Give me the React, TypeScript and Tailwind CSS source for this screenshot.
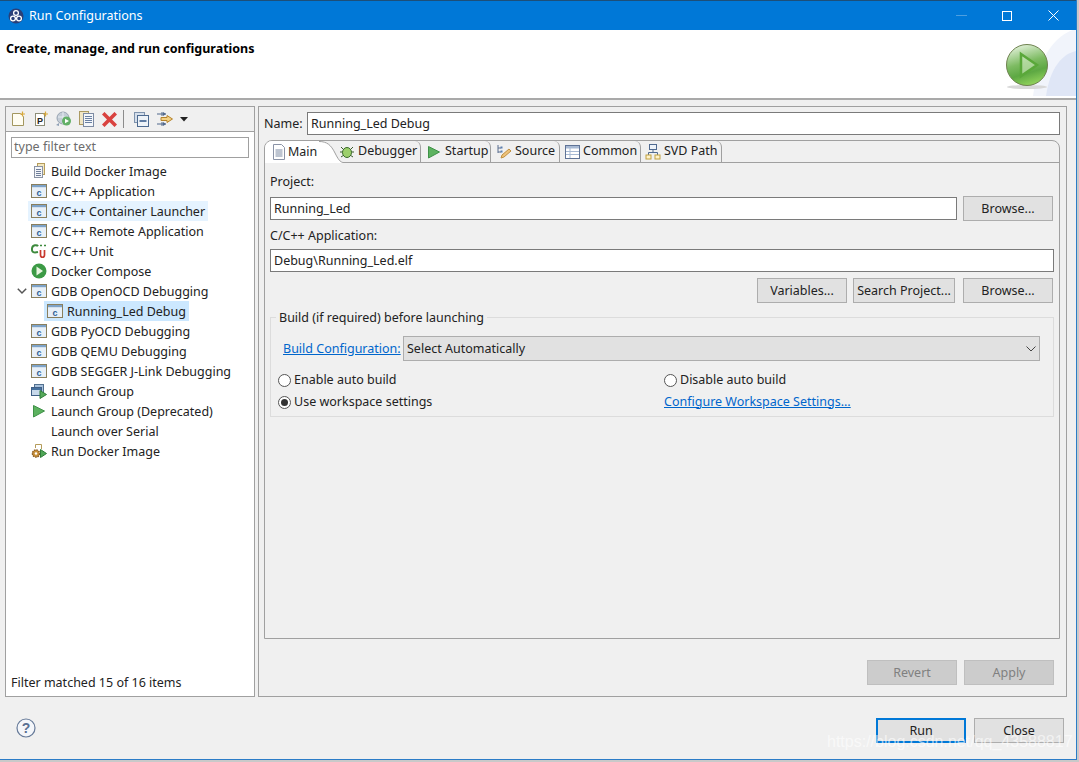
import React from "react";

const font = { fontFamily: '"Noto Sans", sans-serif' };

function CAppIcon() {
  return (
    <svg width="16" height="16" viewBox="0 0 16 16" className="shrink-0">
      <rect x="0.5" y="1.5" width="15" height="13" fill="#fff" stroke="#8a7f5c" />
      <rect x="1" y="2" width="14" height="2.5" fill="#7ea3c8" />
      <rect x="1" y="4.5" width="14" height="9.5" fill="#e8f0f8" />
      <text x="8" y="12.5" textAnchor="middle" fontSize="9" fontWeight="700" fill="#2f5f96" fontFamily="Liberation Sans">c</text>
    </svg>
  );
}

function DocIcon() {
  return (
    <svg width="16" height="16" viewBox="0 0 16 16" className="shrink-0">
      <rect x="6.5" y="0.5" width="7" height="11" fill="#f3e7bf" stroke="#b59c5b" />
      <rect x="3.5" y="3.5" width="8" height="11" fill="#f4f6fa" stroke="#8b93a3" />
      <path d="M5 6.5h5M5 8.5h5M5 10.5h5M5 12.5h5" stroke="#6f7e99" />
    </svg>
  );
}

function CUnitIcon() {
  return (
    <svg width="16" height="16" viewBox="0 0 16 16" className="shrink-0">
      <path d="M7 3.2C6.200 1.800 1.500 1.500 1 5.500S3 10 7 9" fill="none" stroke="#3d8a3d" strokeWidth="2" />
      <path d="M9 2.500h2M10 1.500v2M13 2.500h2M14 1.500v2" stroke="#3d8a3d" />
      <path d="M9.500 7v5c0 3 4 3 4 0V7" fill="none" stroke="#c8392f" strokeWidth="1.700" />
    </svg>
  );
}

function PlayCircle() {
  return (
    <svg width="16" height="16" viewBox="0 0 16 16" className="shrink-0">
      <circle cx="8" cy="8" r="7.500" fill="#3c9a45" />
      <path d="M5.500 3.500 12 8l-6.500 4.500z" fill="#e8f6e0" />
    </svg>
  );
}

function LaunchGroupIcon() {
  return (
    <svg width="16" height="16" viewBox="0 0 16 16" className="shrink-0">
      <rect x="3.500" y="1.500" width="9" height="8" fill="#a8c1dc" stroke="#52708f" />
      <rect x="0.500" y="4.500" width="10" height="8" fill="#c7d8ea" stroke="#3f5f86" />
      <rect x="1" y="5" width="9" height="2" fill="#45709e" />
      <path d="M9 7.500 15.500 11.500 9 15.500z" fill="#55a95a" stroke="#2f7d38" />
    </svg>
  );
}

function PlayTriangle({ size = 16 }: { size?: number }) {
  return (
    <svg width={size} height={size} viewBox="0 0 16 16" className="shrink-0">
      <path d="M2.500 2.500 13.500 8 2.500 14z" fill="#5cb25f" stroke="#3f9148" />
    </svg>
  );
}

function RunDockerIcon() {
  return (
    <svg width="16" height="16" viewBox="0 0 16 16" className="shrink-0">
      <path d="M4.500 5V1.500h6V6" fill="none" stroke="#b59c5b" />
      <circle cx="5" cy="10.500" r="3.600" fill="#c9923c" stroke="#8a5a1f" strokeWidth="1.400" strokeDasharray="1.600 0.800" />
      <circle cx="5" cy="10.500" r="1.200" fill="#fff" />
      <path d="M9.500 6.500 15.500 10.500 9.500 14.500z" fill="#4fa656" stroke="#2f7d38" />
    </svg>
  );
}

function ToolbarIcons() {
  return (
    <div className="flex items-center h-[24px] pl-[5px]">
      <svg width="16" height="16" viewBox="0 0 16 16" className="mr-[6px]">
        <path d="M1.500 2.500h8l3 3v9h-11z" fill="#fffdf2" stroke="#a3975f" />
        <path d="M11.500 0.500v5M9 3h5" stroke="#d9a93a" strokeWidth="1.200" />
      </svg>
      <svg width="16" height="16" viewBox="0 0 16 16" className="mr-[6px]">
        <rect x="2.500" y="2.500" width="9" height="12" fill="#fff" stroke="#8d8d78" />
        <text x="7" y="13" textAnchor="middle" fontSize="9" fontWeight="700" fill="#222" fontFamily="Liberation Sans">P</text>
        <path d="M12.500 0.500v5M10 3h5" stroke="#d9a93a" strokeWidth="1.200" />
      </svg>
      <svg width="18" height="16" viewBox="0 0 18 16" className="mr-[6px]">
        <circle cx="8" cy="7" r="6" fill="#c3ccd6" stroke="#98a4b2" />
        <path d="M3 6h10M8 1v12" stroke="#e8edf2" />
        <circle cx="11.500" cy="10" r="4.500" fill="#62b067" />
        <path d="M10 7.800 14 10l-4 2.200z" fill="#fff" />
        <path d="M1 14l3-2v3z" fill="#8ea0b5" />
      </svg>
      <svg width="16" height="16" viewBox="0 0 16 16" className="mr-[7px]">
        <rect x="0.500" y="0.500" width="9" height="13" fill="#f1e6c4" stroke="#ab9a62" />
        <rect x="4.500" y="2.500" width="10" height="13" fill="#f4f7fb" stroke="#7d8ba3" />
        <path d="M6 5.500h7M6 7.500h7M6 9.500h7M6 11.500h7" stroke="#6a80a3" />
      </svg>
      <svg width="15" height="15" viewBox="0 0 15 15" className="mr-[6px]">
        <path d="M2.500 2.500 12.500 12.500M12.500 2.500 2.500 12.500" stroke="#d9423f" strokeWidth="3.600" strokeLinecap="square" />
      </svg>
      <div className="w-px h-[18px] bg-[#8c8c8c] mr-[10px]" />
      <svg width="15" height="15" viewBox="0 0 15 15" className="mr-[7px]">
        <rect x="0.500" y="0.500" width="10" height="10" fill="#d5dfeb" stroke="#7f93ad" />
        <rect x="3.500" y="3.500" width="11" height="11" fill="#eef3f8" stroke="#4d6a90" />
        <path d="M5.500 9h7" stroke="#2f5487" strokeWidth="1.500" />
      </svg>
      <svg width="18" height="16" viewBox="0 0 18 16" className="mr-[6px]">
        <path d="M1 3h9M1 13h9" stroke="#50688c" />
        <path d="M7 1l3 2-3 2zM7 11l3 2-3 2z" fill="#50688c" />
        <path d="M6 1v4M6 11v4" stroke="#50688c" />
        <path d="M5 6.500h6V4.500l5.500 3.500L11 11.500V9.500H5z" fill="#f3d183" stroke="#b5832c" />
      </svg>
      <svg width="9" height="5" viewBox="0 0 9 5">
        <path d="M0 0h8L4 4.500z" fill="#222" />
      </svg>
    </div>
  );
}

function TreeRow({
  icon,
  label,
  highlight,
  level = 0,
  chevron,
}: {
  icon?: React.ReactNode;
  label: string;
  highlight?: string;
  level?: number;
  chevron?: boolean;
}) {
  return (
    <div className={`flex items-center h-[20px] ${level ? "pl-[38px]" : "pl-[22px]"}`}>
      <div className={`flex items-center h-[20px] pl-[3px] pr-[3px] ${highlight ?? ""} relative`}>
        {chevron && (
          <svg width="10" height="7" viewBox="0 0 10 7" className="absolute left-[-11px] top-[7px]">
            <path d="M0.800 0.800 5 5l4.200-4.200" fill="none" stroke="#555" strokeWidth="1.500" />
          </svg>
        )}
        <div className="w-[16px] h-[16px] mr-[4px] flex items-center justify-center">{icon}</div>
        <span className="text-[12.5px] leading-[20px] pt-[2px] text-[#222] whitespace-nowrap">{label}</span>
      </div>
    </div>
  );
}

function Tab({ icon, label, w }: { icon: React.ReactNode; label: string; w: string }) {
  return (
    <div className={`flex items-center h-[21px] ${w} border-r border-[#a0a0a0] rounded-tr-[6px]`}>
      <span className="mr-[3px] flex w-[16px] h-[16px] items-center justify-center shrink-0">{icon}</span>
      <span className="text-[12.5px] text-[#222] whitespace-nowrap">{label}</span>
    </div>
  );
}

function Btn({ children, w, className = "" }: { children: React.ReactNode; w: string; className?: string }) {
  return (
    <button className={`${w} h-[25px] bg-[#e1e1e1] border border-[#adadad] text-[12.5px] leading-[18px] text-[#222] ${className}`}>{children}</button>
  );
}

function Field({ value, className }: { value: string; className: string }) {
  return (
    <div className={`${className} h-[23px] bg-white border border-[#7a7a7a] pl-[3px] text-[12.5px] leading-[21px] text-[#222]`}>{value}</div>
  );
}

function Radio({ checked }: { checked?: boolean }) {
  return (
    <span className="w-[13px] h-[13px] rounded-full border border-[#555] bg-white flex items-center justify-center mr-[3px] shrink-0">
      {checked && <span className="w-[7px] h-[7px] rounded-full bg-[#333]" />}
    </span>
  );
}

export default function App() {
  return (
    <div className="w-[1079px] h-[762px] bg-[#c9c9c9] overflow-hidden relative" style={font}>
      <div className="w-[1077px] h-[760px] bg-[#f0f0f0] border-r border-b border-[#2b7cc7] flex flex-col">
        {/* title bar */}
        <div className="h-[30px] bg-[#0078d7] border-t border-[#1d4f78] flex items-center shrink-0">
          <svg width="16" height="16" viewBox="0 0 16 16" className="ml-[8px] mr-[5px]">
            <circle cx="8" cy="8" r="7.500" fill="#2a3f78" />
            <circle cx="8" cy="5" r="2.400" fill="none" stroke="#fff" strokeWidth="1.300" />
            <circle cx="5" cy="10.500" r="2.400" fill="none" stroke="#fff" strokeWidth="1.300" />
            <circle cx="11" cy="10.500" r="2.400" fill="none" stroke="#fff" strokeWidth="1.300" />
          </svg>
          <span className="text-[12.5px] pt-[2px] text-white">Run Configurations</span>
          <div className="ml-auto flex items-center">
            <div className="w-[11px] h-px bg-[#4d9fe0] mr-[35px]" />
            <div className="w-[10px] h-[10px] border border-white mr-[36px]" />
            <svg width="11" height="11" viewBox="0 0 11 11" className="mr-[17px]">
              <path d="M0.500 0.500l10 10M10.500 0.500l-10 10" stroke="#fff" />
            </svg>
          </div>
        </div>
        {/* banner */}
        <div className="h-[70px] bg-white border-b-2 border-[#a9a9a9] relative flex shrink-0">
          <div className="pl-[6px] pt-[10px] text-[12.5px] font-bold text-black leading-[18px]">Create, manage, and run configurations</div>
          <svg width="76" height="66" viewBox="0 0 76 66" className="absolute right-0 top-0">
            <defs>
              <linearGradient id="ball" x1="0.300" y1="0" x2="0.600" y2="1">
                <stop offset="0%" stopColor="#e4f2dc" />
                <stop offset="45%" stopColor="#7dbb62" />
                <stop offset="70%" stopColor="#5da843" />
                <stop offset="100%" stopColor="#93d45c" />
              </linearGradient>
            </defs>
            <path d="M76 0H73C55 6 38 28 33 66H76z" fill="#f1f4fb" />
            <path d="M76 21C62 24 50 38 46 66H76z" fill="#dfe6f6" />
            <ellipse cx="27" cy="57" rx="20" ry="2" fill="#d8d8d8" />
            <circle cx="27" cy="35" r="20.500" fill="url(#ball)" stroke="#6f8250" />
            <path d="M21 24 37 35 21 46z" fill="#d4ebc4" fillOpacity="0.600" stroke="#5aa83a" strokeWidth="2.500" />
          </svg>
        </div>
        {/* body */}
        <div className="flex pl-[5px] pt-[6px] gap-[3px] shrink-0">
          {/* left */}
          <div className="w-[250px] h-[591px] bg-white border border-[#a0a0a0] flex flex-col">
            <div className="bg-[#f0f0f0] border-b border-[#a0a0a0]">
              <ToolbarIcons />
            </div>
            <div className="mx-[5px] mt-[5px] h-[21px] border border-[#a0a0a0] pl-[2px] text-[12.5px] leading-[18px] text-[#6d6d6d]">type filter text</div>
            <div className="mt-[3px]">
              <TreeRow icon={<DocIcon />} label="Build Docker Image" />
              <TreeRow icon={<CAppIcon />} label="C/C++ Application" />
              <TreeRow icon={<CAppIcon />} label="C/C++ Container Launcher" highlight="bg-[#e5f3ff]" />
              <TreeRow icon={<CAppIcon />} label="C/C++ Remote Application" />
              <TreeRow icon={<CUnitIcon />} label="C/C++ Unit" />
              <TreeRow icon={<PlayCircle />} label="Docker Compose" />
              <TreeRow icon={<CAppIcon />} label="GDB OpenOCD Debugging" chevron />
              <TreeRow icon={<CAppIcon />} label="Running_Led Debug" level={1} highlight="bg-[#cce8ff]" />
              <TreeRow icon={<CAppIcon />} label="GDB PyOCD Debugging" />
              <TreeRow icon={<CAppIcon />} label="GDB QEMU Debugging" />
              <TreeRow icon={<CAppIcon />} label="GDB SEGGER J-Link Debugging" />
              <TreeRow icon={<LaunchGroupIcon />} label="Launch Group" />
              <TreeRow icon={<PlayTriangle />} label="Launch Group (Deprecated)" />
              <TreeRow label="Launch over Serial" />
              <TreeRow icon={<RunDockerIcon />} label="Run Docker Image" />
            </div>
            <div className="mt-auto pl-[5px] pb-[3px] text-[12.5px] leading-[20px] text-[#222]">Filter matched 15 of 16 items</div>
          </div>
          {/* right */}
          <div className="w-[809px] h-[591px] border border-[#a0a0a0] pl-[5px] pr-[5px] pt-[5px] flex flex-col">
            <div className="flex items-center h-[23px]">
              <span className="w-[43px] text-[12.5px] leading-[18px] pt-[1px] text-[#222]">Name:</span>
              <Field value="Running_Led Debug" className="w-[753px]" />
            </div>
            <div className="mt-[5px] w-[796px] h-[499px] border border-[#a0a0a0] rounded-t-[8px] flex flex-col">
              <div className="flex h-[22px] border-b border-[#a0a0a0] shrink-0">
                <div className="w-[72px] h-[22px] relative flex">
                  <div className="w-[54px] h-[22px] bg-white rounded-tl-[7px] flex items-center pl-[6px]">
                    <span className="mr-[1px] flex w-[16px] h-[16px] items-center justify-center shrink-0">
                      <svg width="14" height="16" viewBox="0 0 14 16">
                        <path d="M1.500 0.500h8l3 3v12h-11z" fill="#fff" stroke="#8a93a6" />
                        <path d="M3.500 6h7M3.500 8h7M3.500 10h7M3.500 12h7" stroke="#7d8ba3" />
                      </svg>
                    </span>
                    <span className="text-[12.5px] text-[#222]">Main</span>
                  </div>
                  <svg width="24" height="22" viewBox="0 0 24 22" className="absolute left-[54px] top-0">
                    <path d="M0 0C8 0 12 4 16 12 19 18 21 21 24 21V22H0z" fill="#fff" />
                    <path d="M0 0.500C8 0.500 12 4 16 12 19 18 21 21 24 21.500" fill="none" stroke="#a0a0a0" />
                  </svg>
                </div>
                <Tab w="w-[84px] pl-[2px]" label="Debugger" icon={
                  <svg width="16" height="16" viewBox="0 0 16 16">
                    <path d="M2 3l3 3M14 3l-3 3M1 8h3M15 8h-3M2 13l3-2M14 13l-3-2" stroke="#3b5b2c" />
                    <ellipse cx="8" cy="8.500" rx="4.500" ry="5" fill="#9ccf6b" stroke="#3b6b2c" />
                  </svg>
                } />
                <Tab w="w-[70px] pl-[5px]" label="Startup" icon={<PlayTriangle size={16} />} />
                <Tab w="w-[69px] pl-[5px]" label="Source" icon={
                  <svg width="16" height="16" viewBox="0 0 16 16">
                    <path d="M2 1v8M2 4h3M2 8h3" stroke="#5a6f90" />
                    <rect x="4.500" y="2.500" width="2" height="2" fill="#5a7fb0" />
                    <rect x="4.500" y="6.500" width="2" height="2" fill="#5a7fb0" />
                    <path d="M5 14l1-3 7-6 2 2-7 6z" fill="#eec27a" stroke="#c09040" />
                  </svg>
                } />
                <Tab w="w-[81px] pl-[4px]" label="Common" icon={
                  <svg width="15" height="14" viewBox="0 0 15 14">
                    <rect x="0.500" y="0.500" width="14" height="13" fill="#fff" stroke="#5f7396" />
                    <rect x="1" y="1" width="13" height="2.500" fill="#a8bad4" />
                    <path d="M1 6.500h13M1 9.500h13M5 3v10" stroke="#a8bad4" />
                  </svg>
                } />
                <Tab w="w-[81px] pl-[4px]" label="SVD Path" icon={
                  <svg width="16" height="16" viewBox="0 0 16 16">
                    <rect x="4.500" y="0.500" width="7" height="5" fill="#eef3f8" stroke="#506a90" />
                    <path d="M8 5.500v3M3.500 11V8.500h9V11" fill="none" stroke="#506a90" />
                    <rect x="1" y="11" width="5" height="4" fill="#fff2c8" stroke="#c0a040" />
                    <rect x="10" y="11" width="5" height="4" fill="#fff2c8" stroke="#c0a040" />
                  </svg>
                } />
              </div>
              <div className="px-[5px] flex flex-col">
                <div className="mt-[10px] text-[12.5px] leading-[18px] text-[#222]">Project:</div>
                <div className="mt-[5px] flex items-center">
                  <Field value="Running_Led" className="w-[687px]" />
                  <Btn w="w-[90px]" className="ml-[6px]">Browse...</Btn>
                </div>
                <div className="mt-[5px] text-[12.5px] leading-[20px] text-[#222]">C/C++ Application:</div>
                <Field value="Debug\Running_Led.elf" className="w-[784px] mt-[3px]" />
                <div className="mt-[6px] flex justify-end w-[783px] gap-[6px]">
                  <Btn w="w-[90px]">Variables...</Btn>
                  <Btn w="w-[102px]" className="mr-[2px]">Search Project...</Btn>
                  <Btn w="w-[90px]">Browse...</Btn>
                </div>
                <div className="mt-[14px] w-[784px] h-[100px] border border-[#dcdcdc] relative px-[12px]">
                  <span className="absolute left-[5px] top-[-9px] px-[3px] bg-[#f0f0f0] text-[12.5px] leading-[18px] text-[#222]">Build (if required) before launching</span>
                  <div className="flex items-center mt-[18px] h-[25px]">
                    <span className="text-[12.5px] pt-[2px] text-[#0066cc] underline w-[120px] whitespace-nowrap">Build Configuration:</span>
                    <div className="w-[637px] h-[25px] bg-[#e1e1e1] border border-[#adadad] flex items-center pl-[3px] text-[12.5px] text-[#222]">
                      <span className="pt-[2px]">Select Automatically</span>
                      <svg width="10" height="6" viewBox="0 0 10 6" className="ml-auto mr-[3px]">
                        <path d="M0.500 0.500 5 5l4.500-4.500" fill="none" stroke="#444" />
                      </svg>
                    </div>
                  </div>
                  <div className="grid grid-cols-[386px_1fr] grid-rows-[22px_22px] mt-[8px] ml-[-5px] items-center text-[12.5px] text-[#222]">
                    <div className="flex items-center"><Radio />Enable auto build</div>
                    <div className="flex items-center"><Radio />Disable auto build</div>
                    <div className="flex items-center"><Radio checked />Use workspace settings</div>
                    <div className="text-[#0066cc] underline">Configure Workspace Settings...</div>
                  </div>
                </div>
              </div>
            </div>
            <div className="flex justify-end w-[790px] gap-[7px] mt-[21px]">
              <Btn w="w-[90px]" className="!bg-[#cccccc] !border-[#bfbfbf] !text-[#808080]">Revert</Btn>
              <Btn w="w-[90px]" className="!bg-[#cccccc] !border-[#bfbfbf] !text-[#808080]">Apply</Btn>
            </div>
          </div>
        </div>
        {/* footer */}
        <div className="flex items-center h-[62px] pl-[16px]">
          <svg width="20" height="20" viewBox="0 0 20 20">
            <circle cx="10" cy="10" r="9" fill="#f4f6fa" stroke="#667a99" strokeWidth="1.200" />
            <text x="10" y="15" textAnchor="middle" fontSize="14" fontWeight="700" fill="#5a6f92" fontFamily="Liberation Sans">?</text>
          </svg>
          <div className="ml-auto flex gap-[8px] mr-[12px] mt-[4px]">
            <button className="w-[90px] h-[25px] pt-[2px] bg-[#e1e1e1] border-2 border-[#0078d7] text-[12.5px] leading-[18px] text-[#222]">Run</button>
            <Btn w="w-[90px]" className="pt-[2px]">Close</Btn>
          </div>
        </div>
      </div>
      <span className="absolute left-[827px] top-[734px] text-[16px] leading-[16px] text-white/60 whitespace-nowrap" style={{ fontFamily: '"Liberation Sans", sans-serif' }}>
        https://blog.csdn.net/qq_43588817
      </span>
    </div>
  );
}
